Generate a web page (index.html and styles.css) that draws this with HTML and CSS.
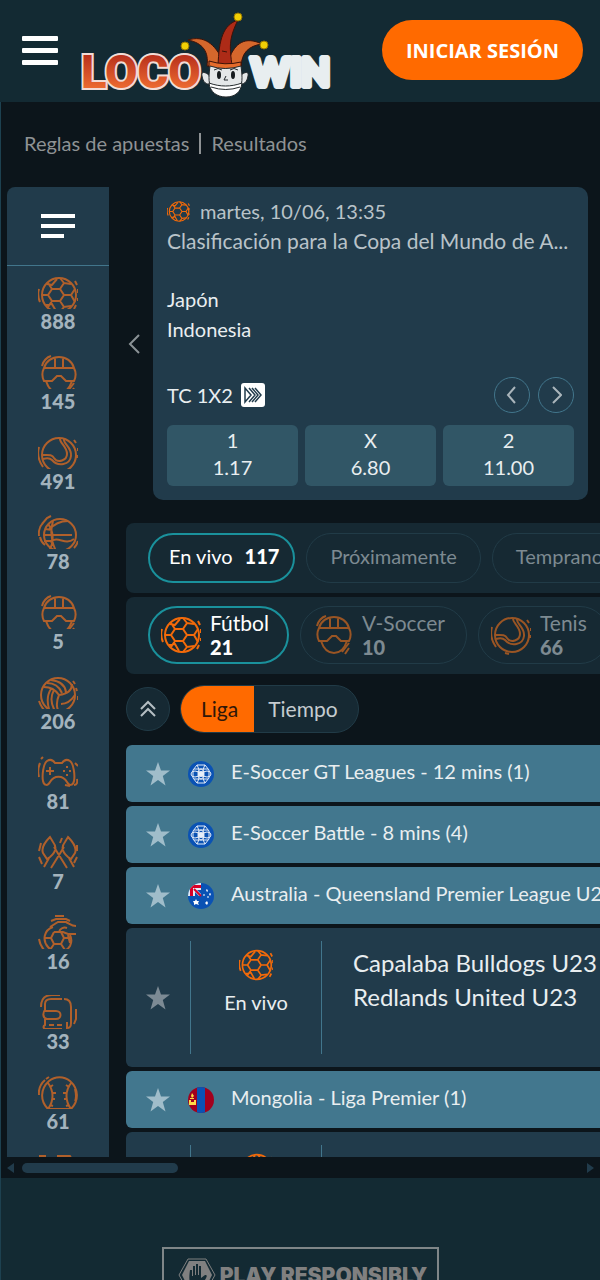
FILE: index.html
```html
<!DOCTYPE html>
<html lang="es">
<head>
    <meta charset="UTF-8">
    <meta name="viewport" content="width=device-width, initial-scale=1.0">
    <title>Locowin - Deportes</title>
    <link rel="stylesheet" href="styles.css">
</head>
<body>
    <!-- Icon sprite -->
    <svg class="sprite" aria-hidden="true">
        <symbol id="football" viewBox="0 0 40 40">
            <circle cx="21" cy="20" r="17"/>
            <path d="M14 14h8l4 6-4 6h-8l-4-6zM14 14l-4-6M22 14l4-6 7 1M26 8l-4-5M26 20h7l4-6M33 20l4 7M22 26l4 6 7-1M26 32l-4 5M14 26l-4 6M10 20H4M9 9l5 1 5-6M8 30l6-1 4 7"/>
            <path d="M1 14q-2 6 1 13M37 6l2 4M40 14v4M40 23v3M38 30l-2 4"/>
        </symbol>
        <symbol id="vsoccer" viewBox="0 0 40 40">
            <path d="M6 13C8 6 14 2 21 2s13 4 15 11M6 13h30c2 4 2 9 0 13h-8l-5-5h-4l-5 5H6c-2-4-2-9 0-13zM8 26c2 6 6 12 13 12s11-6 13-12M17 3v10M25 3v10"/>
            <path d="M4 11c1-5 5-9 9-10M29 37l7-9M32 39l4-6"/>
        </symbol>
        <symbol id="tennis" viewBox="0 0 40 40">
            <circle cx="21" cy="20" r="17"/>
            <path d="M22 3c-1 5 7 8 7 16 0 6-9 10-13 4-2-4-6-3-12-3M26 4c-1 5 8 8 7 17-1 9-13 11-19 4-3-3-6-2-9-1"/>
            <path d="M1 12q-3 10 4 20M36 5l2 3M40 13v3M39 20v3M14 38l4 1"/>
        </symbol>
        <symbol id="basketball" viewBox="0 0 40 40">
            <circle cx="22" cy="20" r="16"/>
            <path d="M6 20h28M10 9c6 7 6 19 1 27M15 6c-3 10-2 20 3 30M11 15C16 9 22 6 30 6M12 27c9-7 14 4 24-3M6 26h8M7 14l7 1"/>
            <path d="M4 9l5-6 4-2M1 21q-1-8 4-13M36 33q3-3 4-7M7 30q-4-3-5-8"/>
        </symbol>
        <symbol id="volleyball" viewBox="0 0 40 40">
            <circle cx="20" cy="20" r="17"/>
            <path d="M21 20c-4-6-9-8-15-8M21 20c8-1 13-5 13-11M21 20c-3 7-3 12 0 17M13 5c9 1 14 5 15 12M9 8c7 0 12 3 15 10M13 14c-4 6-4 13-2 20M16 15c-4 7-3 14 1 21M23 29c6 0 10-3 14-9"/>
            <path d="M1 26q2 6 6 10M35 6l2 3M38 13l1 3M40 21v4"/>
        </symbol>
        <symbol id="gamepad" viewBox="0 0 40 40">
            <path d="M9 6c3-2 6-1 8 2h7c2-3 5-4 8-2 4 3 5 15 4 20-1 5-5 5-7 1-4-7-13-7-17 0-2 4-6 4-7-1C4 21 5 9 9 6zM12 12v8M8 16h8"/>
            <path d="M29 11v2M29 19v2M25 16h2M31 16h2M2 8q-3 7-1 14M5 2l-2 2M37 8l3 3M39 24q1 6-3 6M27 30l5 1"/>
        </symbol>
        <symbol id="rackets" viewBox="0 0 40 40">
            <path d="M12 2C6 8 3 13 5 18l4 6 3-2c6-5 7-10 3-15zM30 2c6 6 9 11 7 16l-4 6-3-2c-6-5-7-10-3-15zM11 23l-5 9M16 12l13 21M31 23l5 9M26 12L13 33"/>
            <path d="M3 8l-2 8M22 8l2-5M1 22l3 7M39 10v6M39 22l-3 6"/>
        </symbol>
        <symbol id="handball" viewBox="0 0 40 40">
            <path d="M15 12c-9 3-11 13-5 20 5 6 18 6 22-1 2-4 2-7 0-11M16 17h7M16 17l-3 6 3 6h7l3-6-3-6M6 23h7M26 23h7M16 29l-4 6M23 29l4 6M30 20l2 8"/>
            <path d="M12 12l8-5h8c4 2 6 4 10 4M38 19h-8l-5-2h-4c1-4 5-5 8-4M13 6l5-2h10l4 2M17 1h9M1 24q1 7 6 12"/>
        </symbol>
        <symbol id="glove" viewBox="0 0 40 40">
            <path d="M18 24H9c-5-1-4-7-2-9V9c0-3 2-5 6-5h11M6 16h12c6 0 6 8 0 8h-6M7 24v6c-2 1-2 3 0 4h17M11 30h5M19 30h5M26 4c6 0 7 4 7 8v16c0 4-1 5-4 5v-6"/>
            <path d="M3 12c0-8 4-12 11-12h8M38 14v10l-2 5"/>
        </symbol>
        <symbol id="baseball" viewBox="0 0 40 40">
            <path d="M10 34c-8-8-8-20 1-28 6-5 15-5 21 0 9 8 9 20 1 28zM10 8c6 8 6 18 0 26M33 8c-6 8-6 18 0 26" />
            <path d="M12 12l3-2M14 18h4M14 24h3M12 30l3 1M31 12l-3-2M29 18h-4M29 24h-3M31 30l-3 1"/>
            <path d="M1 20q-1-9 6-15M11 2l-3 2M37 14q2 8 0 12"/>
        </symbol>
        <symbol id="hockey" viewBox="0 0 40 40">
            <path stroke-width="4" d="M1 1h7M19 1h10q3 0 3 4v18"/>
        </symbol>
        <symbol id="star" viewBox="0 0 24 24">
            <path d="M12 0l3 8.500h9l-7.200 5.500 2.700 9.500L12 18l-7.500 5.500L7.200 14 0 8.500h9z"/>
        </symbol>
        <symbol id="world" viewBox="0 0 26 26">
            <circle cx="13" cy="13" r="13" fill="#0a52b4"/>
            <g fill="none" stroke="#e6edf8">
                <path d="M9 4h8l4 5v8l-4 5H9l-4-5V9zM6 8h14M6 18h14M9 4c3 5 3 13 0 18M17 4c-3 5-3 13 0 18"/>
                <ellipse cx="7" cy="13" rx="4" ry="3"/>
                <ellipse cx="19" cy="13" rx="4" ry="3"/>
                <ellipse cx="13" cy="13" rx="3" ry="5"/>
            </g>
            <circle cx="13" cy="13" r="3" fill="#e6edf8"/>
        </symbol>
        <clipPath id="round"><circle cx="13" cy="13" r="13"/></clipPath>
        <symbol id="australia" viewBox="0 0 26 26">
            <g clip-path="url(#round)">
                <path fill="#0a52b4" d="M0 0h26v26H0z"/>
                <path fill="#e4eaf3" d="M0 0h13v13H0z"/>
                <path fill="#d80027" d="M0 2h13v3H5v8H2V5H0z"/>
                <path fill="#0a52b4" d="M7 9l4 4H7zM9 7h4v4z"/>
                <path stroke="#d80027" stroke-width="2" d="M6 6l7 7"/>
            </g>
            <path fill="#fff" d="M8 16l1 2h2l-1 2 1 2-3-1-2 1v-2l-1-2h2zM19 6l1 2-1 1-1-2zM22 10l1 1-1 2-1-2zM16 11l1 1-1 1-1-1zM20 13l1 1-1 1-1-1zM19 18l1 2-1 2-2-2z"/>
        </symbol>
        <symbol id="mongolia" viewBox="0 0 26 26">
            <g clip-path="url(#round)">
                <path fill="#a2001d" d="M0 0h26v26H0z"/>
                <path fill="#0a52b4" d="M9 0h8v26H9z"/>
                <path fill="#ffda44" d="M1 13h2v2h3v-2h2v5H1zM4 6l2 3-2 2-1-2zM2 11h4v1H2z"/>
            </g>
        </symbol>
    </svg>

    <header class="top-bar">
        <button class="menu-button" aria-label="Menú">
            <span></span>
            <span></span>
            <span></span>
        </button>
        <a class="logo" href="#" aria-label="Locowin">
            <svg width="260" height="90" viewBox="0 0 260 90">
                <defs>
                    <linearGradient id="fire" x1="0" y1="0" x2="0" y2="1">
                        <stop offset="0.2" stop-color="#b8301c"/>
                        <stop offset="0.8" stop-color="#ec6a31"/>
                    </linearGradient>
                </defs>
                <text class="logo-loco" x="1" y="80">LOCO</text>
                <text class="logo-win" x="171" y="78">WIN</text>
                <!-- jester hat -->
                <g stroke="#3d1208" stroke-width="1">
                    <path fill="#d5672c" d="M108 32c16-5 27 4 35 21l-5 5h-11c2-14-4-23-19-26z"/>
                    <path fill="#d5672c" d="M182 36c-17-8-27-1-33 15l2 7h10c1-13 7-20 21-22z"/>
                    <path fill="#ad2b17" d="M158 12c-15 5-19 19-20 46h14c-2-18-4-26 6-46z"/>
                    <path fill="#e46b2b" d="M129 53q16 5 32 1v5q-16 4-32 0z"/>
                </g>
                <path stroke="#3d1208" d="M142 43l5 1"/>
                <g fill="#f1cf05" stroke="#967500">
                    <circle cx="105" cy="38" r="4"/>
                    <circle cx="158" cy="9" r="4"/>
                    <circle cx="184" cy="37" r="4"/>
                </g>
                <!-- face -->
                <g fill="#e4e7e8" stroke="#23292c" stroke-width="1">
                    <path d="M129 67c-5-4-8-3-7 1 1 6 4 9 9 8zM161 67c5-4 8-3 7 1-1 6-4 9-9 8z"/>
                    <path d="M130 58q15 5 31 0c1 8 2 16-1 22-6 12-23 12-29 0-3-6-2-14-1-22z"/>
                    <path fill="#fff" d="M129 75c11 4 22 4 33 0-1 9-7 14-16 14s-16-5-17-14z"/>
                    <path fill="none" d="M134 62q4-3 8 0M150 62q4-3 8 0M146 68l-2 4h4M131 79q15 5 29 0"/>
                </g>
                <ellipse cx="139" cy="67" rx="2" ry="4" fill="#161b1e"/>
                <ellipse cx="153" cy="67" rx="2" ry="4" fill="#161b1e"/>
            </svg>
        </a>
        <button class="login-button">INICIAR SESIÓN</button>
    </header>

    <main class="sportsbook">
        <nav class="sub-nav">
            <a href="#">Reglas de apuestas</a>
            <span class="divider"></span>
            <a href="#">Resultados</a>
        </nav>

        <div class="board">
            <aside class="sports">
                <button class="sports-toggle" aria-label="Deportes">
                    <span></span>
                    <span></span>
                    <span></span>
                </button>
                <a class="sport" href="#"><span class="sport-icon"><svg class="line-icon"><use href="#football"/></svg></span>888</a>
                <a class="sport" href="#"><span class="sport-icon"><svg class="line-icon"><use href="#vsoccer"/></svg></span>145</a>
                <a class="sport" href="#"><span class="sport-icon"><svg class="line-icon"><use href="#tennis"/></svg></span>491</a>
                <a class="sport" href="#"><span class="sport-icon"><svg class="line-icon"><use href="#basketball"/></svg></span>78</a>
                <a class="sport" href="#"><span class="sport-icon"><svg class="line-icon"><use href="#vsoccer"/></svg></span>5</a>
                <a class="sport" href="#"><span class="sport-icon"><svg class="line-icon"><use href="#volleyball"/></svg></span>206</a>
                <a class="sport" href="#"><span class="sport-icon"><svg class="line-icon"><use href="#gamepad"/></svg></span>81</a>
                <a class="sport" href="#"><span class="sport-icon"><svg class="line-icon"><use href="#rackets"/></svg></span>7</a>
                <a class="sport" href="#"><span class="sport-icon"><svg class="line-icon"><use href="#handball"/></svg></span>16</a>
                <a class="sport" href="#"><span class="sport-icon"><svg class="line-icon"><use href="#glove"/></svg></span>33</a>
                <a class="sport" href="#"><span class="sport-icon"><svg class="line-icon"><use href="#baseball"/></svg></span>61</a>
                <a class="sport" href="#" aria-label="Hockey"><span class="sport-icon"><svg class="line-icon"><use href="#hockey"/></svg></span></a>
            </aside>

            <div class="events">
                <section class="featured">
                    <button class="slide-prev" aria-label="Anterior">
                        <svg width="12" height="20" viewBox="0 0 12 20"><path d="M11 1L2 10l9 9"/></svg>
                    </button>
                    <article class="match-card">
                        <div class="match-date">
                            <svg class="line-icon small"><use href="#football"/></svg>
                            <span>martes, 10/06, 13:35</span>
                        </div>
                        <div class="match-league">Clasificación para la Copa del Mundo de A...</div>
                        <div class="match-teams">
                            <div>Japón</div>
                            <div>Indonesia</div>
                        </div>
                        <div class="market">
                            <span>TC 1X2</span>
                            <svg class="early" width="24" height="24" viewBox="0 0 24 24">
                                <rect width="24" height="24" rx="3"/>
                                <path d="M4 5v14l6-7zM8 5l6 7-6 7M11 5l6 7-6 7M14 5l6 7-6 7"/>
                            </svg>
                            <button class="round-button" aria-label="Mercado anterior">
                                <svg width="12" height="20" viewBox="0 0 12 20"><path d="M9 2L2 10l7 8"/></svg>
                            </button>
                            <button class="round-button" aria-label="Mercado siguiente">
                                <svg width="12" height="20" viewBox="0 0 12 20"><path d="M3 2l8 8-8 8"/></svg>
                            </button>
                        </div>
                        <div class="odds">
                            <button><span>1</span><span>1.17</span></button>
                            <button><span>X</span><span>6.80</span></button>
                            <button><span>2</span><span>11.00</span></button>
                        </div>
                    </article>
                </section>

                <div class="panel tabs">
                    <button class="pill active">En vivo <b>117</b></button>
                    <button class="pill">Próximamente</button>
                    <button class="pill">Temprano</button>
                </div>

                <div class="panel filters">
                    <button class="pill active"><svg class="line-icon"><use href="#football"/></svg><span>Fútbol<b>21</b></span></button>
                    <button class="pill"><svg class="line-icon"><use href="#vsoccer"/></svg><span>V-Soccer<b>10</b></span></button>
                    <button class="pill"><svg class="line-icon"><use href="#tennis"/></svg><span>Tenis<b>66</b></span></button>
                </div>

                <div class="sorting">
                    <button class="collapse" aria-label="Contraer todo">
                        <svg width="18" height="18" viewBox="0 0 18 18"><path d="M2 9l7-7 7 7M2 16l7-7 7 7"/></svg>
                    </button>
                    <div class="segment">
                        <button class="selected">Liga</button>
                        <button>Tiempo</button>
                    </div>
                </div>

                <div class="leagues">
                    <div class="league">
                        <svg class="star"><use href="#star"/></svg>
                        <svg class="flag"><use href="#world"/></svg>
                        <span>E-Soccer GT Leagues - 12 mins (1)</span>
                    </div>
                    <div class="league">
                        <svg class="star"><use href="#star"/></svg>
                        <svg class="flag"><use href="#world"/></svg>
                        <span>E-Soccer Battle - 8 mins (4)</span>
                    </div>
                    <div class="league">
                        <svg class="star"><use href="#star"/></svg>
                        <svg class="flag"><use href="#australia"/></svg>
                        <span>Australia - Queensland Premier League U23 (1)</span>
                    </div>
                    <div class="match">
                        <svg class="star"><use href="#star"/></svg>
                        <div class="match-time">
                            <svg class="line-icon medium"><use href="#football"/></svg>
                            <span>En vivo</span>
                        </div>
                        <div class="match-names">
                            <div>Capalaba Bulldogs U23</div>
                            <div>Redlands United U23</div>
                        </div>
                    </div>
                    <div class="league">
                        <svg class="star"><use href="#star"/></svg>
                        <svg class="flag"><use href="#mongolia"/></svg>
                        <span>Mongolia - Liga Premier (1)</span>
                    </div>
                    <div class="match">
                        <div class="match-time">
                            <svg class="line-icon medium"><use href="#football"/></svg>
                        </div>
                    </div>
                </div>
            </div>
        </div>

        <div class="scroll-bar">
            <span class="arrow-left"></span>
            <div class="track"><div class="thumb"></div></div>
            <span class="arrow-right"></span>
        </div>
    </main>

    <footer class="footer">
        <div class="responsible">
            <svg width="38" height="34" viewBox="0 0 38 34">
                <path class="hexagon" d="M10 1h18l9 16-9 16H10L1 17z"/>
                <path class="hexagon-fill" d="M11 3h16l7 14-7 14H11L4 17z"/>
                <path class="hand" d="M13 29c-2-6-2-10-1-17h2v6h1V8h2v9h1V6h2v11h1V8h2v12l4-3c3 0 2 2-2 8l-4 4z"/>
            </svg>
            <span>PLAY RESPONSIBLY</span>
        </div>
    </footer>
</body>
</html>
```
FILE: styles.css
```css
* {
    box-sizing: border-box;
}

body {
    margin: 0;
    height: 100vh;
    overflow: hidden;
    display: flex;
    flex-direction: column;
    background: #132a33;
    color: #e9eef0;
    font-family: Lato, "Open Sans", sans-serif;
    font-size: 20px;
}

button {
    margin: 0;
    padding: 0;
    border: none;
    background: none;
    color: inherit;
    font: inherit;
    cursor: pointer;
}

a {
    color: inherit;
    text-decoration: none;
}

svg {
    display: block;
    flex: none;
}

.sprite {
    position: absolute;
    width: 0;
    height: 0;
}

.line-icon {
    width: 40px;
    height: 40px;
    fill: none;
    stroke: #f26a0a;
    stroke-width: 2;
}

.line-icon.medium {
    width: 34px;
    height: 34px;
}

.line-icon.small {
    width: 23px;
    height: 23px;
}

/* Header */
.top-bar {
    flex: none;
    height: 102px;
    padding: 0 17px 2px 22px;
    display: flex;
    align-items: center;
}

.menu-button {
    width: 36px;
    display: flex;
    flex-direction: column;
    gap: 7px;
}

.menu-button span {
    height: 5px;
    border-radius: 1px;
    background: #fff;
}

.logo {
    margin: 0 auto 0 22px;
    padding-top: 6px;
}

.logo-loco {
    font: 900 47px Roboto, sans-serif;
    fill: url(#fire);
    stroke: #f2dcd6;
    stroke-width: 4;
    paint-order: stroke;
}

.logo-win {
    font: 900 37px Lato, sans-serif;
    fill: #e8eef0;
    stroke: #e8eef0;
    stroke-width: 6;
    stroke-linejoin: round;
}

.login-button {
    height: 60px;
    padding: 0 24px;
    border-radius: 30px;
    background: #ff6a00;
    color: #fff;
    font: bold 20px "Open Sans", sans-serif;
}

/* Sportsbook */
.sportsbook {
    flex: 1;
    min-height: 0;
    display: flex;
    flex-direction: column;
    overflow: hidden;
    background: #0c151b;
    border-left: 1px solid #1d4150;
}

.sub-nav {
    flex: none;
    height: 85px;
    padding: 0 0 3px 23px;
    display: flex;
    align-items: center;
    gap: 10px;
    color: #8e9294;
}

.divider {
    width: 2px;
    height: 21px;
    background: #8e9294;
}

.board {
    flex: 1;
    min-height: 0;
    display: flex;
    gap: 17px;
    padding-left: 6px;
    overflow: hidden;
}

.sports {
    flex: none;
    width: 102px;
    background: #213b4b;
    border-radius: 8px 0 0 0;
    overflow: hidden;
}

.sports-toggle {
    width: 100%;
    height: 79px;
    padding: 0 34px;
    border-bottom: 1px solid #42768c;
    display: flex;
    flex-direction: column;
    justify-content: center;
    gap: 6px;
}

.sports-toggle span {
    height: 4px;
    width: 100%;
    background: #fff;
}

.sports-toggle span:last-child {
    width: 23px;
}

.sport {
    height: 80px;
    padding-top: 9px;
    display: flex;
    flex-direction: column;
    align-items: center;
    color: #a3b3bd;
    font-weight: 900;
    line-height: 24px;
}

.sport-icon {
    height: 34px;
    overflow: hidden;
}

.sport-icon .line-icon {
    stroke: #b0602b;
}

.events {
    flex: 0 0 160%;
}

.featured {
    display: flex;
    align-items: center;
    gap: 13px;
    margin-bottom: 23px;
}

.slide-prev {
    width: 14px;
    display: flex;
    justify-content: flex-end;
}

.slide-prev svg {
    fill: none;
    stroke: #8b9296;
    stroke-width: 2;
}

.match-card {
    width: calc(100vw - 165px);
    padding: 9px 14px 14px;
    border-radius: 10px;
    background: #213b4b;
    line-height: 30px;
}

.match-date {
    display: flex;
    align-items: center;
    gap: 10px;
    color: #b9c3c9;
}

.match-league {
    color: #b9c3c9;
    font-size: 21px;
    overflow: hidden;
    text-overflow: ellipsis;
    white-space: nowrap;
}

.match-teams {
    margin: 28px 0 33px;
}

.market {
    display: flex;
    align-items: center;
    gap: 8px;
    margin-bottom: 12px;
}

.early {
    margin-right: auto;
    fill: #fff;
}

.early path {
    fill: none;
    stroke: #213b4b;
    stroke-width: 1.5;
}

.round-button {
    width: 36px;
    height: 36px;
    border: 1px solid #42768c;
    border-radius: 50%;
    display: flex;
    align-items: center;
    justify-content: center;
}

.round-button svg {
    fill: none;
    stroke: #aab5bb;
    stroke-width: 2;
}

.odds {
    display: grid;
    grid-template-columns: repeat(3, 1fr);
    gap: 7px;
}

.odds button {
    height: 61px;
    padding-bottom: 4px;
    border-radius: 6px;
    background: #315666;
    display: flex;
    flex-direction: column;
    align-items: center;
    justify-content: center;
    line-height: 27px;
}

/* Tabs and filters */
.panel {
    display: flex;
    gap: 11px;
    margin-bottom: 4px;
    padding: 10px 22px;
    border-radius: 8px;
    background: #162933;
}

.pill {
    flex: none;
    height: 50px;
    padding: 0 23px 4px;
    border: 1px solid #213b47;
    border-radius: 30px;
    display: flex;
    align-items: center;
    gap: 12px;
    color: #7d8a91;
}

.pill.active {
    border: 2px solid #1a919c;
    color: #fff;
}

.tabs .active {
    padding: 0 14px 4px 19px;
}

.pill b {
    font-weight: 900;
}

.filters {
    padding: 9px 22px 10px;
}

.filters .pill {
    height: 58px;
    padding: 0 21px 0 12px;
    gap: 9px;
    text-align: left;
    font-size: 21px;
    line-height: 24px;
}

.filters .pill b {
    display: block;
    font-size: 20px;
}

.filters .pill.active {
    padding: 0 18px 0 11px;
}

.filters .pill:not(.active) .line-icon {
    stroke: #9a5524;
}

.sorting {
    display: flex;
    align-items: center;
    gap: 10px;
    padding: 7px 0 12px;
}

.collapse {
    width: 44px;
    height: 44px;
    border: 1px solid #213b47;
    border-radius: 50%;
    background: #162933;
    display: flex;
    align-items: center;
    justify-content: center;
}

.collapse svg {
    fill: none;
    stroke: #b5bec3;
    stroke-width: 2;
}

.segment {
    display: flex;
    height: 48px;
    border-radius: 24px;
    overflow: hidden;
    background: #162933;
    border: 1px solid #213b47;
    font-size: 21px;
}

.segment button {
    padding: 0 20px 2px 14px;
    color: #c5ccd0;
}

.segment .selected {
    padding: 0 16px 2px 20px;
    background: #ff6a00;
    color: #301708;
}

/* Leagues */
.leagues {
    display: flex;
    flex-direction: column;
    gap: 4px;
}

.league {
    height: 57px;
    padding-left: 20px;
    border-radius: 6px;
    background: #42778e;
    display: flex;
    align-items: center;
    white-space: nowrap;
}

.league span {
    padding-bottom: 6px;
}

.star {
    width: 24px;
    height: 24px;
    fill: #a0bdca;
}

.flag {
    width: 26px;
    height: 26px;
    margin: 0 17px 0 18px;
}

.match {
    height: 139px;
    padding: 13px 0 13px 20px;
    border-radius: 6px;
    background: #213b4b;
    display: flex;
}

.match .star {
    align-self: center;
    fill: #7c8a94;
}

.match-time {
    width: 132px;
    margin-left: 20px;
    padding-top: 7px;
    border-left: 1px solid #42768c;
    border-right: 1px solid #42768c;
    display: flex;
    flex-direction: column;
    align-items: center;
    gap: 8px;
}

.match-time:first-child {
    margin-left: 44px;
}

.match-names {
    padding: 5px 0 0 31px;
    font-size: 24px;
    line-height: 34px;
    white-space: nowrap;
}

/* Horizontal scroll bar */
.scroll-bar {
    flex: none;
    height: 21px;
    padding: 0 6px;
    display: flex;
    align-items: center;
    gap: 8px;
}

.track {
    flex: 1;
}

.thumb {
    width: 28%;
    height: 10px;
    border-radius: 5px;
    background: #213b4b;
}

.arrow-left,
.arrow-right {
    border: 5px solid transparent;
    border-right: 7px solid #213b4b;
    border-left: none;
}

.arrow-right {
    border-left: 7px solid #213b4b;
    border-right: none;
}

/* Footer */
.footer {
    flex: none;
    height: 102px;
    padding-top: 69px;
    border-left: 1px solid #1d4150;
    overflow: hidden;
    display: flex;
    justify-content: center;
    align-items: flex-start;
}

.responsible {
    height: 56px;
    padding: 0 10px 0 14px;
    border: 2px solid #7f8688;
    display: flex;
    align-items: center;
    gap: 4px;
    color: #808080;
    font: 900 21px Inter, sans-serif;
}

.hexagon {
    fill: none;
    stroke: #808080;
}

.hexagon-fill {
    fill: #808080;
}

.hand {
    fill: #132a33;
}
```
